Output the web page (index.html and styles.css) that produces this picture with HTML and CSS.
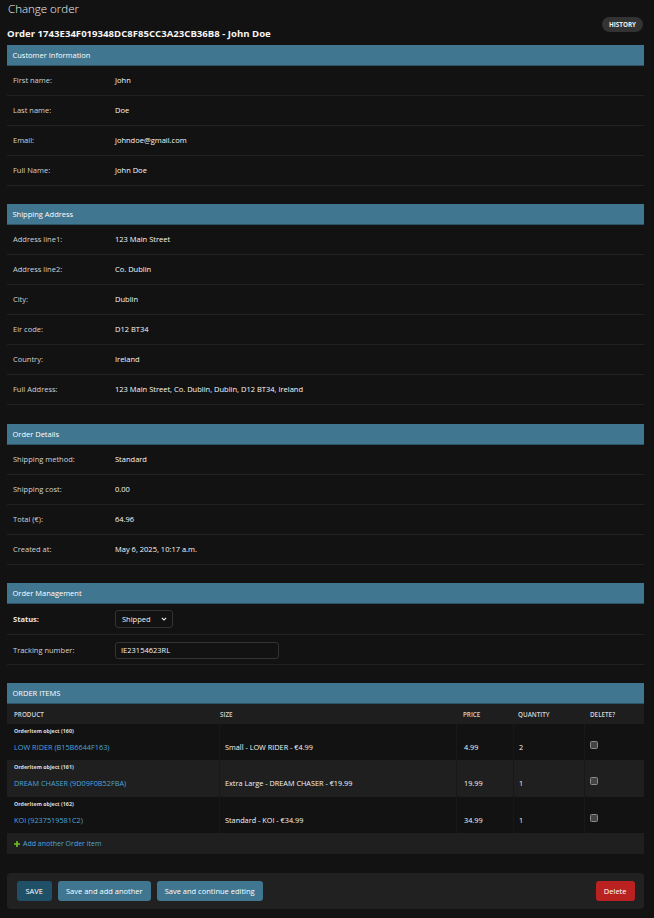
FILE: index.html
```html
<!DOCTYPE html>
<html lang="en">
<head>
<meta charset="utf-8">
<title>Change order</title>
<link rel="stylesheet" href="styles.css">
</head>
<body>
<div class="content">
  <h1>Change order</h1>
  <div class="title-row">
    <h2>Order 1743E34F019348DC8F85CC3A23CB36B8 - John Doe</h2>
    <a class="history">History</a>
  </div>

  <section class="module">
    <h3>Customer Information</h3>
    <div class="row"><span class="lbl">First name:</span><span class="val">John</span></div>
    <div class="row"><span class="lbl">Last name:</span><span class="val">Doe</span></div>
    <div class="row"><span class="lbl">Email:</span><span class="val">johndoe@gmail.com</span></div>
    <div class="row"><span class="lbl">Full Name:</span><span class="val">John Doe</span></div>
  </section>

  <section class="module gap-lg">
    <h3>Shipping Address</h3>
    <div class="row"><span class="lbl">Address line1:</span><span class="val">123 Main Street</span></div>
    <div class="row"><span class="lbl">Address line2:</span><span class="val">Co. Dublin</span></div>
    <div class="row"><span class="lbl">City:</span><span class="val">Dublin</span></div>
    <div class="row"><span class="lbl">Eir code:</span><span class="val">D12 BT34</span></div>
    <div class="row"><span class="lbl">Country:</span><span class="val">Ireland</span></div>
    <div class="row"><span class="lbl">Full Address:</span><span class="val">123 Main Street, Co. Dublin, Dublin, D12 BT34, Ireland</span></div>
  </section>

  <section class="module">
    <h3>Order Details</h3>
    <div class="row"><span class="lbl">Shipping method:</span><span class="val">Standard</span></div>
    <div class="row"><span class="lbl">Shipping cost:</span><span class="val">0.00</span></div>
    <div class="row"><span class="lbl">Total (€):</span><span class="val">64.96</span></div>
    <div class="row"><span class="lbl">Created at:</span><span class="val">May 6, 2025, 10:17 a.m.</span></div>
  </section>

  <section class="module">
    <h3>Order Management</h3>
    <div class="row form-row tall">
      <span class="lbl required">Status:</span>
      <span class="select-wrap">
        <select class="select"><option>Shipped</option></select>
        <svg class="chev" width="6" height="4" viewBox="0 0 6 4"><path d="M0.8 0.8 L3 3 L5.2 0.8" fill="none" stroke="#e8e8e8" stroke-width="1.1"/></svg>
      </span>
    </div>
    <div class="row form-row">
      <span class="lbl">Tracking number:</span>
      <input class="text-input" type="text" value="IE23154623RL">
    </div>
  </section>

  <section class="module inline">
    <h3>Order Items</h3>
    <div class="thead">
      <div class="th c1">Product</div>
      <div class="th c2">Size</div>
      <div class="th c3">Price</div>
      <div class="th c4">Quantity</div>
      <div class="th c5">Delete?</div>
    </div>
    <div class="item">
      <div class="td c1"><p class="obj">OrderItem object (160)</p><a class="link">LOW RIDER (B15B6644F163)</a></div>
      <div class="td c2">Small - LOW RIDER - €4.99</div>
      <div class="td c3">4.99</div>
      <div class="td c4">2</div>
      <div class="td c5"><span class="cb"></span></div>
    </div>
    <div class="item alt">
      <div class="td c1"><p class="obj">OrderItem object (161)</p><a class="link">DREAM CHASER (9D09F0B52FBA)</a></div>
      <div class="td c2">Extra Large - DREAM CHASER - €19.99</div>
      <div class="td c3">19.99</div>
      <div class="td c4">1</div>
      <div class="td c5"><span class="cb"></span></div>
    </div>
    <div class="item">
      <div class="td c1"><p class="obj">OrderItem object (162)</p><a class="link">KOI (9237519581C2)</a></div>
      <div class="td c2">Standard - KOI - €34.99</div>
      <div class="td c3">34.99</div>
      <div class="td c4">1</div>
      <div class="td c5"><span class="cb"></span></div>
    </div>
    <div class="add-row">
      <svg class="plus" width="6" height="6" viewBox="0 0 6 6"><path d="M2.2 0h1.6v2.2H6v1.6H3.8V6H2.2V3.8H0V2.2h2.2z" fill="#70bf2b"/></svg>
      <a class="link">Add another Order item</a>
    </div>
  </section>

  <div class="submit-row">
    <button class="btn default">Save</button>
    <button class="btn">Save and add another</button>
    <button class="btn">Save and continue editing</button>
    <button class="btn delete">Delete</button>
  </div>
</div>
</body>
</html>
```

FILE: styles.css
```css
* { box-sizing: border-box; }

body {
  margin: 0;
  background: #121212;
  color: #eeeeee;
  font-family: "Open Sans", "Noto Sans", sans-serif;
  font-size: 7.5px;
}

.content {
  padding: 0 10px 0 7px;
}

h1 {
  margin: 0;
  height: 17px;
  padding-left: 1px;
  font-size: 11.5px;
  font-weight: 300;
  line-height: 17px;
  color: #f2f2f2;
}

.title-row {
  display: flex;
  justify-content: space-between;
  align-items: flex-start;
  height: 28px;
}

.title-row h2 {
  margin: 10px 0 0;
  font-size: 9.6px;
  font-weight: 700;
  line-height: 14px;
  color: #f5f5f5;
}

.history {
  margin-right: 1px;
  height: 15px;
  padding: 0 7px;
  border-radius: 8px;
  background: #333333;
  color: #f0f0f0;
  font-size: 6.3px;
  font-weight: 700;
  line-height: 15px;
  text-transform: uppercase;
}

.module {
  margin-bottom: 18px;
}

.module.gap-lg {
  margin-bottom: 19px;
}

.module.inline {
  margin-bottom: 19px;
}

.module h3 {
  margin: 0;
  height: 21px;
  padding-left: 5.5px;
  background: #417690;
  border-bottom: 1px solid #2c5466;
  color: #ffffff;
  font-size: 7.5px;
  font-weight: 400;
  line-height: 20px;
}

.inline h3 {
  text-transform: uppercase;
}

.row {
  display: flex;
  height: 30px;
  padding: 9px 0 0 6px;
  border-bottom: 1px solid #222222;
  line-height: 10px;
}

.lbl {
  width: 102px;
  flex: none;
  color: #d2d2d2;
}

.lbl.required {
  font-weight: 700;
  color: #e6e6e6;
}

.val {
  color: #f8f8f8;
}

.form-row {
  align-items: center;
  padding-top: 0;
}

.form-row.tall {
  height: 31px;
}

.select-wrap {
  position: relative;
  display: inline-block;
  margin-top: -1px;
}

.select {
  appearance: none;
  -webkit-appearance: none;
  width: 58px;
  height: 18px;
  padding: 0 0 0 6px;
  border: 1px solid #333333;
  border-radius: 3px;
  background: #121212;
  color: #f2f2f2;
  font-family: inherit;
  font-size: 7.5px;
}

.chev {
  position: absolute;
  right: 6px;
  top: 7px;
}

.text-input {
  width: 164px;
  height: 17px;
  margin-top: 1px;
  padding: 0 5px;
  border: 1px solid #333333;
  border-radius: 3px;
  background: #121212;
  color: #f2f2f2;
  font-family: inherit;
  font-size: 7.5px;
}

.thead,
.item {
  display: grid;
  grid-template-columns: 212px 237px 57px 71px 1fr;
}

.thead {
  height: 20px;
  align-items: center;
  background: #1e1e1e;
  color: #d6d6d6;
  font-size: 6.3px;
  font-weight: 600;
  text-transform: uppercase;
}

.th.c1 { padding-left: 7px; }
.th.c2 { padding-left: 1px; }
.th.c3 { padding-left: 7px; }
.th.c4 { padding-left: 5px; }
.th.c5 { padding-left: 6px; }

.item {
  height: 36px;
  font-size: 7.3px;
  line-height: 10px;
  color: #f5f5f5;
}

.item.alt {
  height: 37px;
  background: #1f1f1f;
}

.td {
  padding-top: 18px;
  border-left: 1px solid #181818;
}

.td.c1 {
  padding: 3px 0 0 7px;
  border-left: none;
}

.td.c2 { padding-left: 5px; }
.td.c3 { padding-left: 7px; }
.td.c4 { padding-left: 5px; }
.td.c5 { padding-left: 5px; padding-top: 17px; }

.obj {
  height: 8px;
  margin: 0 0 7px;
  font-size: 5.3px;
  font-weight: 700;
  line-height: 8px;
  color: #dddddd;
}

.link {
  color: #4ba4de;
}

.td .link {
  display: block;
  line-height: 10px;
}

.cb {
  display: block;
  width: 8px;
  height: 8px;
  border: 1.3px solid #8a8a8a;
  border-radius: 1.5px;
  background: #444444;
}

.add-row {
  display: flex;
  align-items: center;
  gap: 3px;
  height: 21px;
  padding-left: 7px;
  background: #1f1f1f;
  font-size: 7px;
}

.submit-row {
  display: flex;
  gap: 6px;
  height: 36px;
  padding: 8px 9.5px;
  border-radius: 4px;
  background: #212121;
}

.btn {
  height: 20px;
  padding: 0 8px;
  border: none;
  border-radius: 3px;
  background: #417690;
  color: #ffffff;
  font-family: inherit;
  font-size: 7.5px;
}

.btn.default {
  padding: 0 9px;
  background: #205067;
  text-transform: uppercase;
}

.btn.delete {
  margin-left: auto;
  background: #ba2121;
}
```
